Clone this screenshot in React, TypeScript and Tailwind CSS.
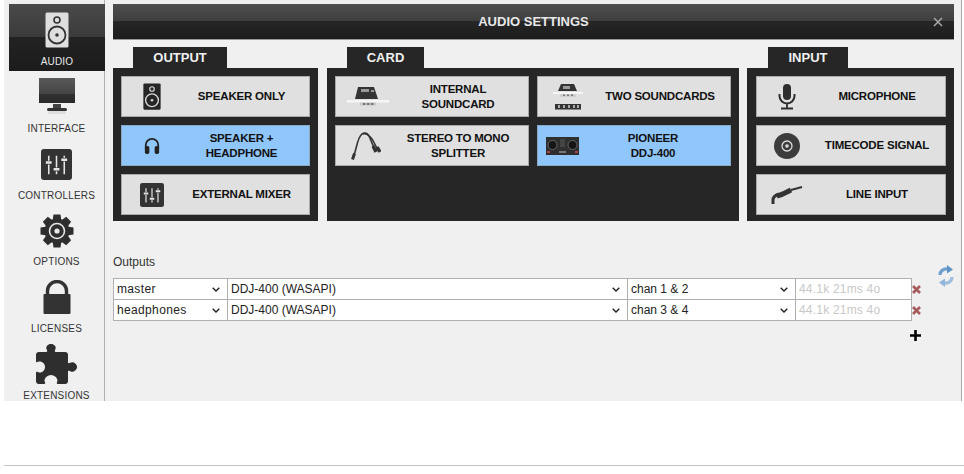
import { ReactNode } from 'react';

// Icons drawn by hand, nothing in the packages looks like these
const Speaker = ({ light = false, className = '' }: { light?: boolean; className?: string }) => {
  const body = light ? '#dedede' : '#262626';
  const ink = light ? '#333' : '#d8d8d8';
  return (
    <svg viewBox="0 0 24 36" className={className}>
      <rect x="0.5" y="0.5" width="23" height="35" rx="1.5" fill={body} />
      <circle cx="12" cy="8" r="3" fill="none" stroke={ink} strokeWidth="1.6" />
      <circle cx="12" cy="23" r="8.5" fill="none" stroke={ink} strokeWidth="1.8" />
      <circle cx="12" cy="23" r="1.8" fill={ink} />
    </svg>
  );
};

const Monitor = () => (
  <svg viewBox="0 0 36 38" className="w-[36px] h-[38px]">
    <defs>
      <linearGradient id="screen" x1="0" y1="0" x2="0" y2="1">
        <stop offset="0" stopColor="#5a5a5a" />
        <stop offset="0.62" stopColor="#444" />
        <stop offset="0.63" stopColor="#303030" />
        <stop offset="1" stopColor="#2a2a2a" />
      </linearGradient>
    </defs>
    <rect x="0" y="0" width="36" height="25" fill="url(#screen)" />
    <rect x="14" y="26" width="8" height="4" fill="#444" />
    <rect x="8" y="30" width="20" height="3" rx="1.5" fill="#333" />
    <rect x="9" y="33" width="18" height="3" rx="1.5" fill="#ddd" />
  </svg>
);

const Mixer = ({ className = '' }: { className?: string }) => (
  <svg viewBox="0 0 32 32" className={className}>
    <rect width="32" height="32" rx="3" fill="#333" />
    <g stroke="#e6e6e6" strokeWidth="1.6">
      <path d="M8 7v5M8 16v10M16 7v12M16 23v3M24 7v2M24 13v13" />
      <path d="M5 14h6M13 21h6M21 11h6" strokeWidth="2.6" />
    </g>
  </svg>
);

const Gear = () => (
  <svg viewBox="0 0 34 34" className="w-[34px] h-[34px]">
    {[0, 45, 90, 135, 180, 225, 270, 315].map((deg) => (
      <path key={deg} d="M13.500 0.500h7l1 7h-9z" fill="#2e2e2e" transform={`rotate(${deg} 17 17)`} />
    ))}
    <circle cx="17" cy="17" r="12.500" fill="#2e2e2e" />
    <circle cx="17" cy="17" r="7.500" fill="none" stroke="#e8e8e8" strokeWidth="1.600" />
    <circle cx="17" cy="17" r="2.600" fill="#e8e8e8" />
  </svg>
);

const Lock = () => (
  <svg viewBox="0 0 28 34" className="w-[28px] h-[34px]">
    <path d="M4.500 16V11a9.500 9.500 0 0 1 19 0v5" fill="none" stroke="#333" strokeWidth="3.400" />
    <rect x="0.5" y="14" width="27" height="20" rx="1" fill="#333" />
  </svg>
);

const Puzzle = () => (
  <svg viewBox="0 0 41 41" className="w-[41px] h-[41px]">
    <path
      d="M3 8h7c1.500 0 1.500-1 .8-2.200C9 2.500 12 0 15 0s6 2.500 4.200 5.800C18.500 7 18.500 8 20 8h9a3 3 0 0 1 3 3v7c0 1.500 1 1.500 2.200.8C37.500 17 41 20 41 23s-3.500 6-6.800 4.200C33 26.500 32 26.500 32 28v9a3 3 0 0 1-3 3h-7c-1.500 0-1.500-1-.8-2.200C22.500 35 19 31 15 31s-7.500 4-6.200 6.800c.7 1.200.7 2.200-.8 2.200H3a3 3 0 0 1-3-3v-8c0-1.500 1-1.500 2.200-.8C5 29.500 9 27 9 23s-4-6.500-6.800-5.200C1 18.500 0 18.500 0 17v-6a3 3 0 0 1 3-3z"
      fill="#2e2e2e"
    />
  </svg>
);

const Headphones = () => (
  <svg viewBox="0 0 18 20" className="w-[16px] h-[18px]">
    <path d="M2 13V9a7 7 0 0 1 14 0v4" fill="none" stroke="#222" strokeWidth="2" />
    <rect x="1" y="10" width="5" height="9" rx="2" fill="#222" />
    <rect x="12" y="10" width="5" height="9" rx="2" fill="#222" />
  </svg>
);

const Card = () => (
  <svg viewBox="0 0 42 20" className="w-[42px] h-[20px]">
    <path d="M11 0h16l4 12H8z" fill="#333" />
    <path d="M14 2h8v3h-8zM24 3h3v2h-3z" fill="#999" />
    <path d="M0 13h42v2.500H0z" fill="#f6f6f6" />
    <path d="M13 15.500h16v3H13z" fill="#c8c8c8" />
    <path d="M16 16h2.500v2H16zM20 16h2.500v2H20zM24 16h2.500v2H24z" fill="#777" />
  </svg>
);

const TwoCards = () => (
  <svg viewBox="0 0 32 26" className="w-[32px] h-[26px]">
    <path d="M9 0h13l3 7H6z" fill="#333" />
    <path d="M11 2h7v3h-7z" fill="#999" />
    <path d="M1 8h30v2H1z" fill="#f6f6f6" />
    <path d="M8 10h16v3H8z" fill="#cfcfcf" />
    <path d="M11 10.500h2v1.500h-2zM15 10.500h2v1.500h-2zM19 10.500h2v1.500h-2z" fill="#777" />
    <rect x="3" y="20" width="26" height="5.500" fill="#333" />
    <path d="M6 21h2v3H6zM11 21h2v3h-2zM16 21h2v3h-2zM21 21h2v3h-2zM25 21h2v3h-2z" fill="#aaa" />
  </svg>
);

const Splitter = () => (
  <svg viewBox="0 0 30 28" className="w-[30px] h-[28px]" fill="none" stroke="#333">
    <path d="M3 23C6 16 6 6 11 2c2-1.500 5-1.500 7 2 2 4 3 8 5 11" strokeWidth="1.600" />
    <path d="M12 2c3-1 6 1 9 5 2 3 3 6 5 9" strokeWidth="1.600" />
    <path d="M1.500 27.500l2-6" strokeWidth="3" />
    <path d="M22 14l3 6M26 15l3 5" strokeWidth="3.400" />
  </svg>
);

const Ddj = () => (
  <svg viewBox="0 0 33 18" className="w-[33px] h-[18px]">
    <rect width="33" height="18" fill="#2f2f2f" />
    <circle cx="6.500" cy="8" r="4.500" fill="#151515" stroke="#666" />
    <circle cx="26.500" cy="8" r="4.500" fill="#151515" stroke="#666" />
    <path d="M14 2h5v8h-5z" fill="#444" />
    <path d="M13 14h7v2h-7z" fill="#777" />
    <path d="M1 14h3v2H1zM29 14h3v2h-3z" fill="#a44" />
  </svg>
);

const Mic = () => (
  <svg viewBox="0 0 18 26" className="w-[18px] h-[26px]">
    <rect x="5" y="0" width="8" height="16" rx="4" fill="#2e2e2e" />
    <path d="M1.500 10v2a7.500 7.500 0 0 0 15 0v-2" fill="none" stroke="#2e2e2e" strokeWidth="2" />
    <path d="M9 20v4M3 24.500h12" stroke="#2e2e2e" strokeWidth="1.800" />
  </svg>
);

const Disc = () => (
  <svg viewBox="0 0 26 26" className="w-[26px] h-[26px]">
    <circle cx="13" cy="13" r="13" fill="#3c3c3c" />
    <circle cx="13" cy="13" r="5" fill="none" stroke="#ddd" strokeWidth="1.300" />
    <circle cx="13" cy="13" r="1.800" fill="#ddd" />
  </svg>
);

const Jack = () => (
  <svg viewBox="0 0 32 20" className="w-[32px] h-[20px]" fill="none" stroke="#333">
    <path d="M2 19v-4c0-3 3-5 6-6" strokeWidth="3" />
    <path d="M6 11c5-1 8-3 14-6" strokeWidth="5" />
    <path d="M20 5l11-3" strokeWidth="2" />
  </svg>
);

const Refresh = () => (
  <svg viewBox="0 0 16 22" className="w-[16px] h-[22px]" fill="none" strokeWidth="3.200">
    <path d="M2 10c0-4 4-7 8-6" stroke="#6f9fcc" />
    <path d="M9 0l6 4.500-6 4z" fill="#5f94c6" />
    <path d="M14 12c0 4-4 7-8 6" stroke="#9dbfdd" />
    <path d="M7 22l-6-4.500 6-4z" fill="#8fb6da" />
  </svg>
);

const RedX = () => (
  <svg viewBox="0 0 9 9" className="w-[9px] h-[9px]">
    <path d="M1 1l7 7M8 1l-7 7" stroke="#a85a5a" strokeWidth="2.600" />
  </svg>
);

const Plus = () => (
  <svg viewBox="0 0 11 11" className="w-[11px] h-[11px]">
    <path d="M5.500 0v11M0 5.500h11" stroke="#000" strokeWidth="2.600" />
  </svg>
);

const NavItem = ({ label, icon, active, h }: { label: string; icon: ReactNode; active?: boolean; h: string }) => (
  <div
    className={`${h} shrink-0 flex flex-col items-center justify-end pb-[3px] ${
      active ? '-mr-px bg-[linear-gradient(#4a4a4a,#3a3a3a_50%,#222_50%,#1c1c1c)] text-[#e8e8e8]' : 'text-[#333]'
    }`}
  >
    <div className="flex-1 flex items-center justify-center">{icon}</div>
    <span className="text-[10px] leading-[12px] tracking-[0.2px]">{label}</span>
  </div>
);

const OptionButton = ({ icon, children, active }: { icon: ReactNode; children: ReactNode; active?: boolean }) => (
  <div
    className={`h-[41px] flex items-center border text-[#111] ${
      active ? 'bg-[#8fc6fb] border-[#8aa9c6]' : 'bg-[#e0e0e0] border-[#a9a9a9]'
    }`}
  >
    <div className="w-[60px] shrink-0 flex items-center justify-center">{icon}</div>
    <div className="flex-1 pr-[8px] text-center text-[11.5px] font-bold leading-[15px] tracking-[-0.2px]">{children}</div>
  </div>
);

const Section = ({ title, tabClass, width, children }: { title: string; tabClass: string; width: string; children: ReactNode }) => (
  <div className={`${width} shrink-0 flex flex-col`}>
    <div className={`${tabClass} h-[21px] bg-[#262626] text-[#f0f0f0] text-[13px] font-bold flex items-center justify-center`}>{title}</div>
    <div className="h-[153px] bg-[#262626] p-[8px]">{children}</div>
  </div>
);

const OutputSelect = ({ value, width, wide }: { value: string; width: string; wide?: boolean }) => (
  <div className={`relative ${width} shrink-0 border-r border-[#b0b0b0]`}>
    <select
      className={`block w-full h-full appearance-none bg-white pl-[3px] text-[12px] text-[#222] outline-none ${wide ? 'tracking-[0.35px]' : ''}`}
      defaultValue={value}
    >
      <option>{value}</option>
    </select>
    <svg viewBox="0 0 8 5" className="absolute right-[7px] top-[8px] w-[8px] h-[5px] pointer-events-none">
      <path d="M0.700 0.700L4 4l3.300-3.300" fill="none" stroke="#222" strokeWidth="1.400" />
    </svg>
  </div>
);

const OutputRow = ({ name, chan, last }: { name: string; chan: string; last?: boolean }) => (
  <div className={`flex ${last ? 'h-[20px]' : 'h-[21px] border-b border-[#b0b0b0]'}`}>
    <OutputSelect value={name} width="w-[114px]" wide />
    <OutputSelect value="DDJ-400 (WASAPI)" width="w-[400px]" />
    <OutputSelect value={chan} width="w-[168px]" />
    <div className="flex-1 bg-white flex items-center pl-[3px] text-[12px] tracking-[0.2px] text-[#c8c8c8]">44.1k 21ms 4o</div>
  </div>
);

export default function App() {
  return (
    <div className="w-[964px] h-[474px] bg-white overflow-hidden font-['Liberation_Sans',Arial,sans-serif]">
      <div className="h-[401px] ml-[4px] mr-[2px] flex bg-[#f0f0f0] border-r border-[#a8a8a8] overflow-hidden">
        {/* Sidebar */}
        <div className="w-[101px] shrink-0 border-r border-[#b0b0b0] pt-[4px] pl-[5px] flex flex-col">
          <NavItem label="AUDIO" h="h-[67px]" active icon={<Speaker light className="w-[24px] h-[36px]" />} />
          <NavItem label="INTERFACE" h="h-[67px]" icon={<Monitor />} />
          <NavItem label="CONTROLLERS" h="h-[67px]" icon={<Mixer className="w-[31px] h-[31px]" />} />
          <NavItem label="OPTIONS" h="h-[66px]" icon={<Gear />} />
          <NavItem label="LICENSES" h="h-[67px]" icon={<Lock />} />
          <NavItem label="EXTENSIONS" h="h-[67px]" icon={<Puzzle />} />
        </div>

        {/* Main */}
        <div className="flex-1 min-w-0 pt-[4px] pl-[8px]">
          <div className="relative w-[841px] h-[36px] bg-[linear-gradient(#4e4e4e,#3e3e3e_50%,#262626_50%,#1c1c1c)] flex items-center justify-center border-b border-[#999]">
            <span className="text-[13px] font-bold text-[#e8e8e8]">AUDIO SETTINGS</span>
            <span className="absolute right-[11px] top-[13px]">
              <svg viewBox="0 0 10 10" className="block w-[10px] h-[10px]">
                <path d="M1 1l8 8M9 1l-8 8" stroke="#aaa" strokeWidth="1.500" />
              </svg>
            </span>
          </div>

          <div className="flex gap-[9px] mt-[7px]">
            <Section title="OUTPUT" width="w-[205px]" tabClass="ml-[20px] w-[94px]">
              <div className="flex flex-col gap-[8px]">
                <OptionButton icon={<Speaker className="w-[18px] h-[27px]" />}>SPEAKER ONLY</OptionButton>
                <OptionButton active icon={<Headphones />}>
                  SPEAKER +<br />HEADPHONE
                </OptionButton>
                <OptionButton icon={<Mixer className="w-[24px] h-[24px]" />}>EXTERNAL MIXER</OptionButton>
              </div>
            </Section>

            <Section title="CARD" width="w-[412px]" tabClass="ml-[20px] w-[77px]">
              <div className="grid grid-cols-2 gap-[8px]">
                <OptionButton icon={<span className="block ml-[4px]"><Card /></span>}>
                  INTERNAL<br />SOUNDCARD
                </OptionButton>
                <OptionButton icon={<TwoCards />}>TWO SOUNDCARDS</OptionButton>
                <OptionButton icon={<Splitter />}>
                  STEREO TO MONO<br />SPLITTER
                </OptionButton>
                <OptionButton active icon={<span className="block mr-[12px]"><Ddj /></span>}>
                  <div className="pr-[14px]">
                    PIONEER<br />DDJ-400
                  </div>
                </OptionButton>
              </div>
            </Section>

            <div className="-ml-px">
              <Section title="INPUT" width="w-[207px]" tabClass="ml-[21px] w-[80px]">
                <div className="flex flex-col gap-[8px] pl-[1px]">
                  <OptionButton icon={<Mic />}>MICROPHONE</OptionButton>
                  <OptionButton icon={<Disc />}>TIMECODE SIGNAL</OptionButton>
                  <OptionButton icon={<Jack />}>LINE INPUT</OptionButton>
                </div>
              </Section>
            </div>
          </div>

          {/* Outputs table */}
          <div className="mt-[34px] text-[12px] leading-[14px] text-[#333]">Outputs</div>
          <div className="relative mt-[9px] w-[799px] border border-[#b0b0b0]">
            <OutputRow name="master" chan="chan 1 &amp; 2" />
            <OutputRow name="headphones" chan="chan 3 &amp; 4" last />
            <span className="absolute left-[798px] top-[6px]"><RedX /></span>
            <span className="absolute left-[798px] top-[27px]"><RedX /></span>
            <span className="absolute left-[796px] top-[51px]"><Plus /></span>
            <span className="absolute left-[824px] top-[-14px]"><Refresh /></span>
          </div>
        </div>
      </div>
      <div className="mt-[64px] ml-[4px] h-px bg-[#c4c4c4]" />
    </div>
  );
}
